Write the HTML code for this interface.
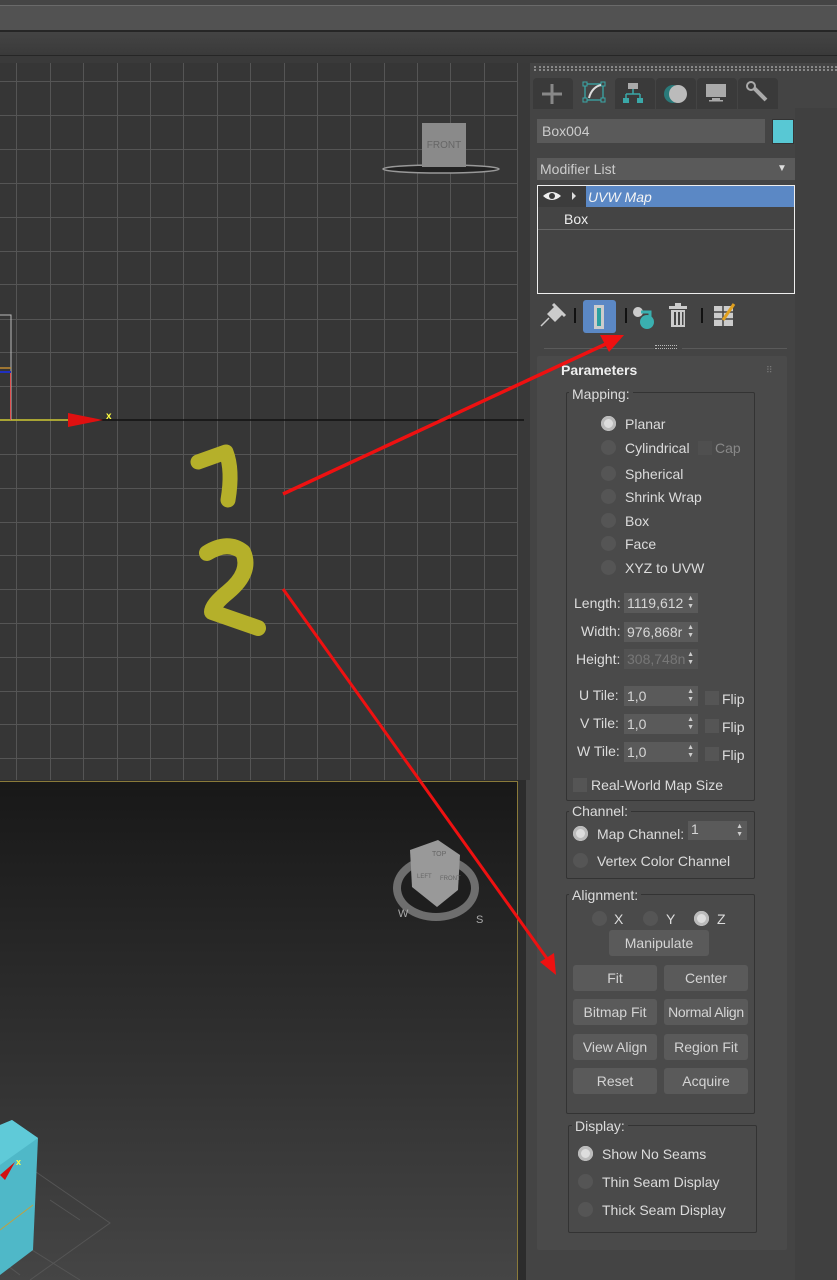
<!DOCTYPE html>
<html><head><meta charset="utf-8"><style>
*{margin:0;padding:0;box-sizing:border-box}
body{width:837px;height:1280px;overflow:hidden;background:#444;font-family:"Liberation Sans","DejaVu Sans",sans-serif;position:relative;color:#ddd}
.a{position:absolute}
.t{position:absolute;font-size:14px;color:#dcdcdc;white-space:nowrap;line-height:16px}
.fld{position:absolute;background:#5a5a5a}
.grp{position:absolute;border:1px solid #333;border-radius:2px}
.gl{position:absolute;background:#4a4a4a;padding:0 3px;font-size:14px;color:#dcdcdc;line-height:16px}
.rad{position:absolute;width:15px;height:15px;border-radius:50%;background:#555}
.rad.on{background:#ddd;box-shadow:inset 0 0 0 3px #bbb}
.chk{position:absolute;width:14px;height:14px;background:#555}
.btn{position:absolute;background:#5a5a5a;border-radius:3px;font-size:14px;color:#d4d4d4;text-align:center;line-height:26px;height:26px}
.sp{position:absolute;width:74px;height:20px;background:#5a5a5a;font-size:14px;color:#d6d6d6;line-height:20px;padding-left:3px}
.sp:after{content:"▲\A▼";white-space:pre;position:absolute;right:4px;top:2px;font-size:7px;line-height:8px;color:#ccc}
</style></head><body>
<div class="a" style="left:0;top:0;width:837px;height:5px;background:#454545"></div>
<div class="a" style="left:0;top:5px;width:837px;height:1px;background:#6a6a6a"></div>
<div class="a" style="left:0;top:6px;width:837px;height:24px;background:#525252"></div>
<div class="a" style="left:0;top:30px;width:837px;height:2px;background:#262626"></div>
<div class="a" style="left:0;top:32px;width:837px;height:23px;background:linear-gradient(#444,#3a3a3a)"></div>
<div class="a" style="left:0;top:55px;width:837px;height:1px;background:#262626"></div>
<div class="a" style="left:0;top:56px;width:837px;height:8px;background:#3a3a3a"></div>

<svg class="a" style="left:0;top:63px" width="530" height="717">
<rect width="530" height="717" fill="#393939"/>
<rect width="518" height="717" fill="#363636"/>
<g stroke="#555" stroke-width="1">
<line x1="16.5" y1="0" x2="16.5" y2="717"/><line x1="50.5" y1="0" x2="50.5" y2="717"/><line x1="83.5" y1="0" x2="83.5" y2="717"/><line x1="117.5" y1="0" x2="117.5" y2="717"/><line x1="150.5" y1="0" x2="150.5" y2="717"/><line x1="183.5" y1="0" x2="183.5" y2="717"/><line x1="217.5" y1="0" x2="217.5" y2="717"/><line x1="250.5" y1="0" x2="250.5" y2="717"/><line x1="284.5" y1="0" x2="284.5" y2="717"/><line x1="317.5" y1="0" x2="317.5" y2="717"/><line x1="350.5" y1="0" x2="350.5" y2="717"/><line x1="384.5" y1="0" x2="384.5" y2="717"/><line x1="417.5" y1="0" x2="417.5" y2="717"/><line x1="450.5" y1="0" x2="450.5" y2="717"/><line x1="484.5" y1="0" x2="484.5" y2="717"/><line x1="517.5" y1="0" x2="517.5" y2="717"/>
<line x1="0" y1="18.5" x2="518" y2="18.5"/><line x1="0" y1="52.5" x2="518" y2="52.5"/><line x1="0" y1="86.5" x2="518" y2="86.5"/><line x1="0" y1="120.5" x2="518" y2="120.5"/><line x1="0" y1="154.5" x2="518" y2="154.5"/><line x1="0" y1="188.5" x2="518" y2="188.5"/><line x1="0" y1="221.5" x2="518" y2="221.5"/><line x1="0" y1="256.5" x2="518" y2="256.5"/><line x1="0" y1="289.5" x2="518" y2="289.5"/><line x1="0" y1="323.5" x2="518" y2="323.5"/><line x1="0" y1="391.5" x2="518" y2="391.5"/><line x1="0" y1="425.5" x2="518" y2="425.5"/><line x1="0" y1="459.5" x2="518" y2="459.5"/><line x1="0" y1="492.5" x2="518" y2="492.5"/><line x1="0" y1="526.5" x2="518" y2="526.5"/><line x1="0" y1="560.5" x2="518" y2="560.5"/><line x1="0" y1="594.5" x2="518" y2="594.5"/><line x1="0" y1="628.5" x2="518" y2="628.5"/><line x1="0" y1="661.5" x2="518" y2="661.5"/><line x1="0" y1="695.5" x2="518" y2="695.5"/>
</g>
<line x1="0" y1="357" x2="524" y2="357" stroke="#111" stroke-width="1.5"/>
<line x1="0" y1="357" x2="70" y2="357" stroke="#d4cf3a" stroke-width="1.5"/>
<polygon points="68,350 103,357 68,364" fill="#e01010"/>
<text x="106" y="356" font-size="10" font-weight="bold" fill="#ffff40" font-family="Liberation Sans">x</text>
<polyline points="0,252 11,252 11,357" fill="none" stroke="#bbb" stroke-width="1"/>
<line x1="0" y1="305" x2="11" y2="305" stroke="#c08a30" stroke-width="1.5"/>
<line x1="0" y1="309" x2="11" y2="309" stroke="#2030c0" stroke-width="2"/>
<line x1="10.5" y1="310" x2="10.5" y2="357" stroke="#e05050" stroke-width="1"/>
<ellipse cx="441" cy="106" rx="58" ry="4" fill="#222" stroke="#999" stroke-width="1.5"/>
<rect x="422" y="60" width="44" height="44" fill="#8a8a8a"/>
<text x="444" y="85" font-size="10" text-anchor="middle" fill="#666" font-family="Liberation Sans">FRONT</text>
</svg>

<!-- handwritten numbers -->
<svg class="a" style="left:0;top:0" width="300" height="660">
<g fill="none" stroke="#b5b02a" stroke-linecap="round" stroke-linejoin="round">
<path d="M198,462 L226,452 Q233,470 228,500" stroke-width="15"/>
<path d="M207,553 Q228,540 243,552 Q252,572 228,592 Q212,605 212,612 Q235,620 258,628" stroke-width="16"/>
</g>
</svg>

<div class="a" style="left:0;top:780px;width:526px;height:500px;background:#2c2c2c"></div>
<div class="a" style="left:0;top:781px;width:518px;height:499px;border-top:1px solid #8a7a3a;border-right:1px solid #8a7a3a;background:linear-gradient(#181818,#454545)"></div>
<svg class="a" style="left:0;top:780px" width="520" height="500">
<g stroke="#555" stroke-width="1" fill="none">
<path d="M36,392 L110,443 L30,500 M0,450 L80,500 M50,420 L80,440 M0,480 L20,495"/>
</g>
<polygon points="0,345 12,340 38,358 33,470 0,495" fill="#4fb8c8"/>
<polygon points="0,345 12,340 38,358 0,385" fill="#5fcad8"/>
<line x1="0" y1="450" x2="33" y2="425" stroke="#c0a040" stroke-width="1"/>
<polygon points="0,395 15,382 5,400" fill="#d01010"/>
<text x="16" y="385" font-size="9" font-weight="bold" fill="#ffff40">x</text>
<ellipse cx="436" cy="108" rx="43" ry="33" fill="#6e6e6e"/>
<ellipse cx="436" cy="108" rx="35" ry="25" fill="#1e1e1e"/>
<polygon points="410,70 438,60 460,75 458,110 437,127 412,107" fill="#999"/>
<text x="432" y="76" font-size="7" fill="#666">TOP</text>
<text x="417" y="98" font-size="6" fill="#666">LEFT</text>
<text x="440" y="100" font-size="6" fill="#666">FRONT</text>
<text x="398" y="137" font-size="11" fill="#aaa">W</text>
<text x="476" y="143" font-size="11" fill="#aaa">S</text>
</svg>

<div class="a" style="left:530px;top:63px;width:307px;height:1217px;background:#444"></div>
<div class="a" style="left:795px;top:108px;width:42px;height:1172px;background:#404040"></div>
<div class="a" style="left:534px;top:66px;width:303px;height:5px;border-top:2px dotted #999;border-bottom:2px dotted #999;opacity:.8"></div>
<div class="a" style="left:533px;top:78px;width:40px;height:31px;background:#3a3a3a;border-radius:4px 4px 0 0"></div>
<div class="a" style="left:574px;top:78px;width:40px;height:31px;background:#444;border-radius:4px 4px 0 0"></div>
<div class="a" style="left:615px;top:78px;width:40px;height:31px;background:#3a3a3a;border-radius:4px 4px 0 0"></div>
<div class="a" style="left:656px;top:78px;width:40px;height:31px;background:#3a3a3a;border-radius:4px 4px 0 0"></div>
<div class="a" style="left:697px;top:78px;width:40px;height:31px;background:#3a3a3a;border-radius:4px 4px 0 0"></div>
<div class="a" style="left:738px;top:78px;width:40px;height:31px;background:#3a3a3a;border-radius:4px 4px 0 0"></div>
<svg class="a" style="left:530px;top:78px" width="260" height="31">
<path d="M22,6 V26 M12,16 H32" stroke="#888" stroke-width="3"/>
<rect x="55" y="6" width="18" height="16" fill="none" stroke="#3aa8a8" stroke-width="1.3"/>
<rect x="53" y="4" width="4" height="4" fill="#444" stroke="#3aa8a8"/><rect x="71" y="4" width="4" height="4" fill="#444" stroke="#3aa8a8"/><rect x="53" y="20" width="4" height="4" fill="#444" stroke="#3aa8a8"/><rect x="71" y="20" width="4" height="4" fill="#444" stroke="#3aa8a8"/>
<path d="M59,20 C61,12 66,8 71,7" stroke="#ddd" stroke-width="2" fill="none"/>
<rect x="98" y="5" width="10" height="6" fill="#aaa"/><path d="M103,11 V16 M96,16 H110 M96,16 V20 M110,16 V20" stroke="#3aa8a8" stroke-width="1.5" fill="none"/><rect x="93" y="20" width="6" height="5" fill="#3aa8a8"/><rect x="107" y="20" width="6" height="5" fill="#3aa8a8"/>
<circle cx="143" cy="16" r="9" fill="#2a7a7a"/><circle cx="148" cy="16" r="9" fill="#bbb"/>
<rect x="176" y="6" width="20" height="13" fill="#aaa"/><rect x="182" y="20" width="8" height="2" fill="#aaa"/><rect x="179" y="22" width="14" height="1.5" fill="#aaa"/>
<path d="M221,7 L236,22" stroke="#aaa" stroke-width="4"/><circle cx="221" cy="8" r="4" fill="#3a3a3a" stroke="#aaa" stroke-width="2"/>
</svg>
<div class="fld" style="left:537px;top:119px;width:228px;height:24px"></div>
<div class="t" style="left:542px;top:123px;font-size:14px;color:#ccc">Box004</div>
<div class="a" style="left:772px;top:119px;width:22px;height:25px;background:#58c8d4;border:1px solid #333"></div>
<div class="fld" style="left:537px;top:158px;width:258px;height:22px"></div>
<div class="t" style="left:540px;top:161px;color:#ccc">Modifier List</div>
<div class="t" style="left:777px;top:161px;font-size:10px;color:#ddd">▼</div>
<div class="a" style="left:537px;top:185px;width:258px;height:109px;border:1px solid #eee;background:#444"></div>
<div class="a" style="left:538px;top:186px;width:48px;height:21px;background:#3c3c3c"></div>
<div class="a" style="left:586px;top:186px;width:208px;height:21px;background:#5b88c5"></div>
<svg class="a" style="left:541px;top:189px" width="40" height="15"><path d="M2,7 Q11,-1 20,7 Q11,15 2,7Z" fill="#eee"/><circle cx="11" cy="7" r="3" fill="#3c3c3c"/><path d="M31,3 L35,7 L31,11Z" fill="#ddd"/></svg>
<div class="t" style="left:588px;top:189px;font-style:italic;color:#f4f4f4">UVW Map</div>
<div class="a" style="left:538px;top:229px;width:256px;height:1px;background:#666"></div>
<div class="t" style="left:564px;top:211px;color:#eee">Box</div>
<svg class="a" style="left:537px;top:298px" width="210" height="38">
<path d="M4,28 L12,20" stroke="#ccc" stroke-width="1.5"/><path d="M10,16 L18,8 L26,16 L18,24Z" fill="#ccc"/><path d="M16,6 L28,18" stroke="#ccc" stroke-width="3"/>
<rect x="37" y="10" width="2" height="15" fill="#111"/>
<rect x="46" y="2" width="33" height="33" rx="3" fill="#5b88c5"/>
<rect x="57" y="7" width="10" height="24" fill="#ccc"/><rect x="60" y="10" width="4" height="18" fill="#2aa0a0"/>
<rect x="88" y="10" width="2" height="15" fill="#111"/>
<circle cx="101" cy="14" r="5" fill="#ccc"/><circle cx="110" cy="24" r="7" fill="#3ab0b0"/><path d="M104,14 H113 V22" stroke="#3ab0b0" stroke-width="3" fill="none"/>
<rect x="132" y="8" width="18" height="3" fill="#ccc"/><rect x="138" y="5" width="6" height="3" fill="#ccc"/><rect x="134" y="12" width="14" height="17" fill="#ccc"/><rect x="137" y="14" width="2" height="13" fill="#444"/><rect x="141" y="14" width="2" height="13" fill="#444"/><rect x="145" y="14" width="1.5" height="13" fill="#444"/>
<rect x="164" y="10" width="2" height="15" fill="#111"/>
<rect x="177" y="8" width="19" height="20" fill="#ccc"/><path d="M177,14 H196 M177,21 H196 M186,8 V28" stroke="#444" stroke-width="1.5"/><path d="M186,22 L197,6" stroke="#e0a020" stroke-width="3"/>
</svg>
<div class="a" style="left:544px;top:348px;width:110px;height:1px;background:#5a5a5a"></div>
<div class="a" style="left:682px;top:348px;width:105px;height:1px;background:#5a5a5a"></div>
<div class="a" style="left:655px;top:345px;width:22px;height:4px;border-top:1px dotted #bbb;border-bottom:1px dotted #bbb"></div>

<div class="a" style="left:537px;top:356px;width:250px;height:894px;background:#4a4a4a;border-radius:2px"></div>
<div class="t" style="left:561px;top:362px;font-weight:bold;font-size:14px;color:#eee">Parameters</div>
<div class="t" style="left:766px;top:362px;font-size:9px;color:#777">⠿</div>

<div class="grp" style="left:566px;top:392px;width:189px;height:409px"></div>
<div class="gl" style="left:569px;top:386px">Mapping:</div>
<div class="rad on" style="left:601px;top:416px"></div><div class="t" style="left:625px;top:416px">Planar</div>
<div class="rad" style="left:601px;top:440px"></div><div class="t" style="left:625px;top:440px">Cylindrical</div>
<div class="chk" style="left:698px;top:441px;background:#4f4f4f"></div><div class="t" style="left:715px;top:440px;color:#888">Cap</div>
<div class="rad" style="left:601px;top:466px"></div><div class="t" style="left:625px;top:466px">Spherical</div>
<div class="rad" style="left:601px;top:489px"></div><div class="t" style="left:625px;top:489px">Shrink Wrap</div>
<div class="rad" style="left:601px;top:513px"></div><div class="t" style="left:625px;top:513px">Box</div>
<div class="rad" style="left:601px;top:536px"></div><div class="t" style="left:625px;top:536px">Face</div>
<div class="rad" style="left:601px;top:560px"></div><div class="t" style="left:625px;top:560px">XYZ to UVW</div>

<div class="t" style="left:574px;top:595px">Length:</div><div class="sp" style="left:624px;top:593px">1119,612</div>
<div class="t" style="left:581px;top:623px">Width:</div><div class="sp" style="left:624px;top:622px">976,868r</div>
<div class="t" style="left:576px;top:651px">Height:</div><div class="sp" style="left:624px;top:649px;color:#777;background:#525252">308,748n</div>

<div class="t" style="left:579px;top:687px">U Tile:</div><div class="sp" style="left:624px;top:686px">1,0</div><div class="chk" style="left:705px;top:691px"></div><div class="t" style="left:722px;top:691px">Flip</div>
<div class="t" style="left:580px;top:715px">V Tile:</div><div class="sp" style="left:624px;top:714px">1,0</div><div class="chk" style="left:705px;top:719px"></div><div class="t" style="left:722px;top:719px">Flip</div>
<div class="t" style="left:577px;top:743px">W Tile:</div><div class="sp" style="left:624px;top:742px">1,0</div><div class="chk" style="left:705px;top:747px"></div><div class="t" style="left:722px;top:747px">Flip</div>
<div class="chk" style="left:573px;top:778px"></div><div class="t" style="left:591px;top:777px">Real-World Map Size</div>

<div class="grp" style="left:566px;top:811px;width:189px;height:68px"></div>
<div class="gl" style="left:569px;top:803px">Channel:</div>
<div class="rad on" style="left:573px;top:826px"></div><div class="t" style="left:597px;top:826px">Map Channel:</div>
<div class="sp" style="left:688px;top:821px;height:19px;width:59px;line-height:16px">1</div>
<div class="rad" style="left:573px;top:853px"></div><div class="t" style="left:597px;top:853px">Vertex Color Channel</div>

<div class="grp" style="left:566px;top:894px;width:189px;height:220px"></div>
<div class="gl" style="left:569px;top:887px">Alignment:</div>
<div class="rad" style="left:592px;top:911px"></div><div class="t" style="left:614px;top:911px">X</div>
<div class="rad" style="left:643px;top:911px"></div><div class="t" style="left:666px;top:911px">Y</div>
<div class="rad on" style="left:694px;top:911px"></div><div class="t" style="left:717px;top:911px">Z</div>
<div class="btn" style="left:609px;top:930px;width:100px">Manipulate</div>
<div class="btn" style="left:573px;top:965px;width:84px">Fit</div><div class="btn" style="left:664px;top:965px;width:84px">Center</div>
<div class="btn" style="left:573px;top:999px;width:84px">Bitmap Fit</div><div class="btn" style="left:664px;top:999px;width:84px;letter-spacing:-0.3px">Normal Align</div>
<div class="btn" style="left:573px;top:1034px;width:84px">View Align</div><div class="btn" style="left:664px;top:1034px;width:84px">Region Fit</div>
<div class="btn" style="left:573px;top:1068px;width:84px">Reset</div><div class="btn" style="left:664px;top:1068px;width:84px">Acquire</div>

<div class="grp" style="left:568px;top:1125px;width:189px;height:108px"></div>
<div class="gl" style="left:572px;top:1118px">Display:</div>
<div class="rad on" style="left:578px;top:1146px"></div><div class="t" style="left:602px;top:1146px">Show No Seams</div>
<div class="rad" style="left:578px;top:1174px"></div><div class="t" style="left:602px;top:1174px">Thin Seam Display</div>
<div class="rad" style="left:578px;top:1202px"></div><div class="t" style="left:602px;top:1202px">Thick Seam Display</div>

<svg class="a" style="left:0;top:0" width="837" height="1280">
<line x1="283" y1="494" x2="608" y2="343" stroke="#ee1111" stroke-width="3.5"/>
<polygon points="624,335 600,335 609,352" fill="#ee1111"/>
<line x1="283" y1="589" x2="548" y2="960" stroke="#ee1111" stroke-width="3"/>
<polygon points="556,975 540,962 554,953" fill="#ee1111"/>
</svg>
</body></html>
